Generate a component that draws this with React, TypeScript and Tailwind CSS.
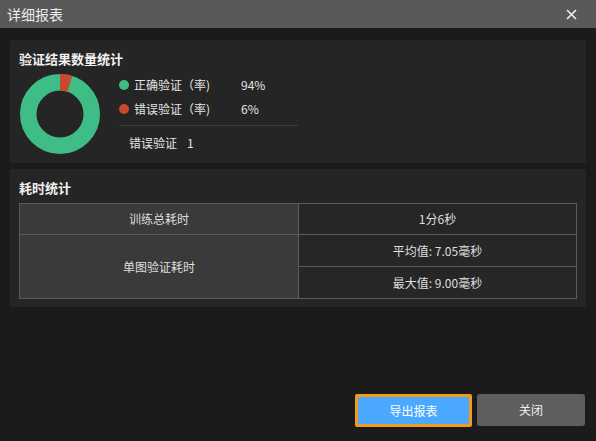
import React from 'react';

const GREEN = '#3fbd87';
const RED = '#c9482f';

// donut: full green ring with a red slice from 12 o'clock
function Donut() {
  const cx = 41;
  const cy = 41;
  const ro = 40;
  const ri = 23.5;
  const a = (18 * Math.PI) / 180;
  const p = (r: number, ang: number) => [cx + r * Math.sin(ang), cy - r * Math.cos(ang)];
  const [ox1, oy1] = p(ro, 0);
  const [ox2, oy2] = p(ro, a);
  const [ix2, iy2] = p(ri, a);
  const [ix1, iy1] = p(ri, 0);
  const slice = `M${ox1} ${oy1} A${ro} ${ro} 0 0 1 ${ox2} ${oy2} L${ix2} ${iy2} A${ri} ${ri} 0 0 0 ${ix1} ${iy1} Z`;
  return (
    <svg width="82" height="82" viewBox="0 0 82 82" className="shrink-0">
      <circle cx={cx} cy={cy} r={(ro + ri) / 2} fill="none" stroke={GREEN} strokeWidth={ro - ri} />
      <path d={slice} fill={RED} />
    </svg>
  );
}

function LegendRow({ color, label, value }: { color: string; label: string; value: string }) {
  return (
    <div className="flex items-center h-[24px]">
      <span className="w-[10px] h-[10px] rounded-full shrink-0" style={{ background: color }} />
      <span className="ml-[5px] w-[107px]">{label}</span>
      <span>{value}</span>
    </div>
  );
}

export default function App() {
  return (
    <div
      className="w-[596px] h-[441px] bg-[#1b1b1b] flex flex-col text-[12px] text-[#e4e4e4]"
      style={{ fontFamily: '"Noto Sans CJK SC", "Noto Sans", sans-serif' }}
    >
      <div className="h-[28px] bg-[#595959] flex items-center justify-between pl-[7px] pr-[19px] shrink-0">
        <span className="text-[14px] leading-[18px] text-[#ececec]">详细报表</span>
        <svg width="11" height="11" viewBox="0 0 11 11">
          <path d="M1 1 L10 10 M10 1 L1 10" stroke="#eeeeee" strokeWidth="1.6" />
        </svg>
      </div>

      <div className="px-[10px] pt-[12px] flex flex-col gap-[6px]">
        <div className="h-[123px] bg-[#252525] rounded-[2px] pl-[9px] pt-[11px]">
          <div className="text-[13px] leading-[16px] font-bold text-[#f0f0f0]">验证结果数量统计</div>
          <div className="flex mt-[6px]">
            <Donut />
            <div className="ml-[18px] flex flex-col">
              <LegendRow color={GREEN} label="正确验证（率)" value="94%" />
              <LegendRow color={RED} label="错误验证（率)" value="6%" />
              <div className="mt-[4px] w-[179px] h-px bg-[#3c3c3c]" />
              <div className="mt-[9px] pl-[10px] leading-[16px] flex gap-[10px]">
                <span>错误验证</span>
                <span>1</span>
              </div>
            </div>
          </div>
        </div>

        <div className="h-[138px] bg-[#252525] rounded-[2px] px-[9px] pt-[11px]">
          <div className="text-[13px] leading-[16px] font-bold text-[#f0f0f0]">耗时统计</div>
          <table className="mt-[7px] w-[558px] border-collapse table-fixed text-center text-[#dedede]">
            <tbody>
              <tr className="h-[31px]">
                <td className="border border-[#5c5c5c] bg-[#3a3a3a] w-[279px]">训练总耗时</td>
                <td className="border border-[#5c5c5c] bg-[#262626]">1分6秒</td>
              </tr>
              <tr className="h-[32px]">
                <td rowSpan={2} className="border border-[#5c5c5c] bg-[#3a3a3a]">单图验证耗时</td>
                <td className="border border-[#5c5c5c] bg-[#262626]">平均值: 7.05毫秒</td>
              </tr>
              <tr className="h-[32px]">
                <td className="border border-[#5c5c5c] bg-[#262626]">最大值: 9.00毫秒</td>
              </tr>
            </tbody>
          </table>
        </div>
      </div>

      <div className="mt-auto flex justify-end gap-[5px] pr-[11px] pb-[14px]">
        <button className="w-[117px] h-[33px] border-[3px] border-[#f39a1b] bg-[#4aa9fe] text-white rounded-[2px]">
          导出报表
        </button>
        <button className="w-[108px] h-[32px] bg-[#5e5e5e] text-[#f0f0f0] rounded-[3px]">关闭</button>
      </div>
    </div>
  );
}
